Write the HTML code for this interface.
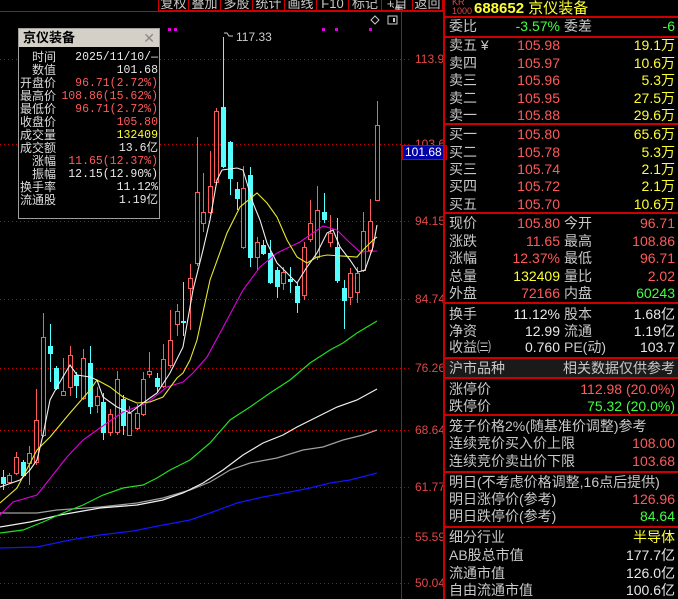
<!DOCTYPE html>
<html><head><meta charset="utf-8"><style>
*{margin:0;padding:0;box-sizing:border-box}
body{width:678px;height:599px;background:#000;overflow:hidden;position:relative;font-family:"Liberation Sans","Noto Sans CJK SC",sans-serif;color:#c8c8c8}
.a{position:absolute;white-space:nowrap}
.tb{position:absolute;top:0;height:11px;border-right:1px solid #c00;border-bottom:1px solid #c00;color:#c8c8c8;font-size:13px;line-height:8px;text-align:center;overflow:hidden}
.ax{position:absolute;left:415px;font-size:12px;color:#e04848;font-family:"Liberation Sans",sans-serif}
.ib{position:absolute;font-size:12px;line-height:13px}
.p{position:absolute;left:449px;width:228px;font-size:14px;height:18px;line-height:18px}
.p .l{position:absolute;left:0;color:#c8c8c8}
.p .m{position:absolute;right:117px;}
.p .m2{position:absolute;left:115px;color:#c8c8c8}
.p .r{position:absolute;right:2px}
.hl{position:absolute;left:443px;width:235px;height:2px;background:#c00}
.R{color:#ff5a5a}.G{color:#40ff40}.Y{color:#ffff30}.W{color:#e8e8e8}
</style></head><body>
<div class="tb" style="left:158px;width:31px;border-left:1px solid #c00">复权</div>
<div class="tb" style="left:189px;width:32px">叠加</div>
<div class="tb" style="left:221px;width:32px">多股</div>
<div class="tb" style="left:253px;width:32px">统计</div>
<div class="tb" style="left:285px;width:32px">画线</div>
<div class="tb" style="left:317px;width:32px">F10</div>
<div class="tb" style="left:349px;width:33px">标记</div>
<div class="tb" style="left:382px;width:31px">+自选</div>
<div class="tb" style="left:413px;width:30px">返回</div>
<div class="a" style="left:0;top:11px;width:443px;height:1px;background:#c00"></div>
<svg class="a" style="left:0;top:0" width="443" height="599">
<line x1="401.5" y1="12" x2="401.5" y2="599" stroke="#c00"/>
<g stroke="#c00" stroke-dasharray="1,3">
<line x1="0" y1="59.5" x2="410" y2="59.5"/><line x1="0" y1="144.5" x2="410" y2="144.5"/><line x1="0" y1="221.5" x2="410" y2="221.5"/><line x1="0" y1="299.5" x2="410" y2="299.5"/><line x1="0" y1="368.5" x2="410" y2="368.5"/><line x1="0" y1="430.5" x2="410" y2="430.5"/><line x1="0" y1="487.5" x2="410" y2="487.5"/><line x1="0" y1="537.5" x2="410" y2="537.5"/><line x1="0" y1="583.5" x2="410" y2="583.5"/>
</g>
<g fill="#e000e0"><rect x="168" y="28" width="3" height="3"/><rect x="174" y="28" width="3" height="3"/><rect x="322" y="28" width="3" height="3"/><rect x="335" y="28" width="3" height="3"/><rect x="369" y="28" width="3" height="3"/></g>
<path d="M375 16 l4 4 -4 4 -4 -4z" fill="none" stroke="#ccc"/>
<rect x="388" y="16" width="9" height="8" fill="none" stroke="#ccc"/><rect x="393" y="18" width="2" height="4" fill="#ccc"/>
<path d="M224 33 h3 l2 3 h4" fill="none" stroke="#ccc"/>
<text x="236" y="41" fill="#ccc" font-size="12" font-family="Liberation Sans">117.33</text>
<g fill="none" stroke-width="1.2">
<polyline stroke="#1414ff" points="0,548 37,547 70,540 100,535 133,531 163,525 190,520 210,513 237,503 263,497 290,492 310,488 330,483 350,480 377,473"/>
<polyline stroke="#a0a0a0" points="0,513 37,513 57,510 100,507 137,503 163,498 190,490 210,482 230,470 250,463 277,458 303,450 323,447 343,440 363,435 377,430"/>
<polyline stroke="#f0f0f0" points="0,527 30,522 60,515 100,508 137,505 163,500 183,493 203,483 223,470 243,455 263,443 283,435 297,427 317,417 337,407 357,400 377,389"/>
<polyline stroke="#20e020" points="0,533 23,530 43,522 63,513 83,505 103,495 123,488 143,485 157,478 170,470 190,460 210,443 230,420 250,407 270,393 290,380 310,363 330,350 343,343 357,333 377,321"/>
</g>
<g stroke="#ff5a5a" fill="#000">
<line x1="9.5" y1="473" x2="9.5" y2="484"/><rect x="7.5" y="475.5" width="4" height="7"/>
<line x1="16.5" y1="452" x2="16.5" y2="475"/><rect x="14.5" y="457.5" width="4" height="16"/>
<line x1="29.5" y1="446" x2="29.5" y2="485"/><rect x="27.5" y="453.5" width="4" height="10"/>
<line x1="36.5" y1="389" x2="36.5" y2="465"/><rect x="34.5" y="420.5" width="4" height="42"/>
<line x1="43.5" y1="313" x2="43.5" y2="437"/><rect x="41.5" y="337.5" width="4" height="98"/>
<line x1="63.5" y1="358" x2="63.5" y2="396"/><rect x="61.5" y="391.5" width="4" height="4"/>
<line x1="70.5" y1="346" x2="70.5" y2="396"/><rect x="68.5" y="355.5" width="4" height="32"/>
<line x1="83.5" y1="349" x2="83.5" y2="400"/><rect x="81.5" y="358.5" width="4" height="40"/>
<line x1="97.5" y1="387" x2="97.5" y2="413"/><rect x="95.5" y="396.5" width="4" height="9"/>
<line x1="110.5" y1="409" x2="110.5" y2="436"/><rect x="108.5" y="414.5" width="4" height="18"/>
<line x1="117.5" y1="371" x2="117.5" y2="435"/><rect x="115.5" y="379.5" width="4" height="53"/>
<line x1="129.5" y1="406" x2="129.5" y2="436"/><rect x="127.5" y="413.5" width="4" height="22"/>
<line x1="137.5" y1="404" x2="137.5" y2="430"/><rect x="135.5" y="413.5" width="4" height="15"/>
<line x1="143.5" y1="372" x2="143.5" y2="416"/><rect x="141.5" y="379.5" width="4" height="35"/>
<line x1="149.5" y1="352" x2="149.5" y2="378"/><rect x="147.5" y="371.5" width="4" height="3"/>
<line x1="163.5" y1="344" x2="163.5" y2="388"/><rect x="161.5" y="359.5" width="4" height="27"/>
<line x1="170.5" y1="310" x2="170.5" y2="368"/><rect x="168.5" y="340.5" width="4" height="25"/>
<line x1="177.5" y1="304" x2="177.5" y2="336"/><rect x="175.5" y="311.5" width="4" height="13"/>
<line x1="190.5" y1="264" x2="190.5" y2="330"/><rect x="188.5" y="278.5" width="4" height="10"/>
<line x1="197.5" y1="137" x2="197.5" y2="266"/><rect x="195.5" y="192.5" width="4" height="71"/>
<line x1="203.5" y1="173" x2="203.5" y2="232"/><rect x="201.5" y="212.5" width="4" height="11"/>
<line x1="210.5" y1="151" x2="210.5" y2="214"/><rect x="208.5" y="186.5" width="4" height="26"/>
<line x1="216.5" y1="108" x2="216.5" y2="185"/><rect x="214.5" y="111.5" width="4" height="71"/>
<line x1="243.5" y1="166" x2="243.5" y2="249"/><rect x="241.5" y="188.5" width="4" height="59"/>
<line x1="257.5" y1="237" x2="257.5" y2="271"/><rect x="255.5" y="242.5" width="4" height="15"/>
<line x1="283.5" y1="267" x2="283.5" y2="290"/><rect x="281.5" y="272.5" width="4" height="11"/>
<line x1="304.5" y1="242" x2="304.5" y2="300"/><rect x="302.5" y="247.5" width="4" height="48"/>
<line x1="310.5" y1="200" x2="310.5" y2="242"/><rect x="308.5" y="223.5" width="4" height="16"/>
<line x1="317.5" y1="186" x2="317.5" y2="260"/><rect x="315.5" y="210.5" width="4" height="47"/>
<line x1="330.5" y1="215" x2="330.5" y2="247"/><rect x="328.5" y="233.5" width="4" height="9"/>
<line x1="350.5" y1="268" x2="350.5" y2="305"/><rect x="348.5" y="273.5" width="4" height="24"/>
<line x1="357.5" y1="267" x2="357.5" y2="303"/><rect x="355.5" y="273.5" width="4" height="19"/>
<line x1="363.5" y1="212" x2="363.5" y2="272"/><rect x="361.5" y="231.5" width="4" height="39"/>
<line x1="370.5" y1="199" x2="370.5" y2="253"/><rect x="368.5" y="221.5" width="4" height="29"/>
<line x1="377.5" y1="101" x2="377.5" y2="125"/><rect x="375.5" y="125.5" width="4" height="75"/>
</g>
<g stroke="#54ffff" fill="#54ffff">
<line x1="3.5" y1="470" x2="3.5" y2="490"/><rect x="1.5" y="477.5" width="4" height="6"/>
<line x1="23.5" y1="460" x2="23.5" y2="477"/><rect x="21.5" y="462.5" width="4" height="13"/>
<line x1="50.5" y1="324" x2="50.5" y2="382"/><rect x="48.5" y="346.5" width="4" height="7"/>
<line x1="56.5" y1="366" x2="56.5" y2="390"/><rect x="54.5" y="368.5" width="4" height="20"/>
<line x1="76.5" y1="372" x2="76.5" y2="398"/><rect x="74.5" y="375.5" width="4" height="10"/>
<line x1="90.5" y1="346" x2="90.5" y2="414"/><rect x="88.5" y="363.5" width="4" height="43"/>
<line x1="103.5" y1="393" x2="103.5" y2="440"/><rect x="101.5" y="402.5" width="4" height="30"/>
<line x1="123.5" y1="395" x2="123.5" y2="435"/><rect x="121.5" y="399.5" width="4" height="26"/>
<line x1="157.5" y1="373" x2="157.5" y2="393"/><rect x="155.5" y="378.5" width="4" height="8"/>
<line x1="183.5" y1="282" x2="183.5" y2="336"/><rect x="181.5" y="321.5" width="4" height="1"/>
<line x1="223.5" y1="37" x2="223.5" y2="168"/><rect x="221.5" y="107.5" width="4" height="59"/>
<line x1="230.5" y1="141" x2="230.5" y2="195"/><rect x="228.5" y="142.5" width="4" height="36"/>
<line x1="237.5" y1="182" x2="237.5" y2="210"/><rect x="235.5" y="189.5" width="4" height="9"/>
<line x1="250.5" y1="167" x2="250.5" y2="267"/><rect x="248.5" y="175.5" width="4" height="82"/>
<line x1="263.5" y1="240" x2="263.5" y2="255"/><rect x="261.5" y="245.5" width="4" height="8"/>
<line x1="270.5" y1="240" x2="270.5" y2="284"/><rect x="268.5" y="253.5" width="4" height="29"/>
<line x1="277.5" y1="267" x2="277.5" y2="298"/><rect x="275.5" y="270.5" width="4" height="16"/>
<line x1="290.5" y1="267" x2="290.5" y2="293"/><rect x="288.5" y="279.5" width="4" height="2"/>
<line x1="297.5" y1="283" x2="297.5" y2="313"/><rect x="295.5" y="286.5" width="4" height="16"/>
<line x1="324.5" y1="193" x2="324.5" y2="223"/><rect x="322.5" y="212.5" width="4" height="7"/>
<line x1="337.5" y1="218" x2="337.5" y2="283"/><rect x="335.5" y="247.5" width="4" height="33"/>
<line x1="344.5" y1="280" x2="344.5" y2="329"/><rect x="342.5" y="288.5" width="4" height="12"/>
</g>
<g fill="none" stroke-width="1.1">
<polyline stroke="#e000e0" points="0,515 13,502 37,495 67,457 83,440 97,430 123,412 147,403 167,387 183,382 193,373 207,357 227,320 243,290 260,267 277,253 300,242 323,226 337,230 347,240 360,252 377,251"/>
<polyline stroke="#e8e830" points="0,503 17,488 37,450 50,437 70,413 90,390 97,380 110,387 123,397 137,403 150,402 163,397 177,378 183,373 190,360 197,340 210,280 227,233 240,207 257,193 267,203 277,217 287,240 297,257 307,263 317,257 327,255 357,257 363,250 373,240 377,237"/>
<polyline stroke="#f0f0f0" points="0,487 20,480 30,470 37,460 43,435 50,400 57,387 70,365 77,375 90,377 97,380 103,397 117,407 130,413 143,403 157,393 170,373 183,347 193,290 203,250 210,220 217,180 222,170 237,168 243,170 253,203 260,220 267,243 277,263 287,273 297,283 307,267 317,253 327,233 333,230 340,247 350,260 358,272 365,270 373,247 377,225"/>
</g>
</svg>
<div class="ax" style="top:52px">113.9</div>
<div class="ax" style="top:137px">103.6</div>
<div class="ax" style="top:214px">94.15</div>
<div class="ax" style="top:292px">84.74</div>
<div class="ax" style="top:361px">76.26</div>
<div class="ax" style="top:423px">68.64</div>
<div class="ax" style="top:480px">61.77</div>
<div class="ax" style="top:530px">55.59</div>
<div class="ax" style="top:576px">50.04</div>
<div class="a" style="left:402px;top:145px;width:45px;height:15px;background:#0000a8;border:1px solid #c00;color:#fff;font-size:12px;line-height:13px;padding-left:2px">101.68</div>
<div class="a" style="left:18px;top:28px;width:142px;height:191px;background:#000;border:1px solid #a0a0a0">
<div style="height:18px;background:#d4d0c8;color:#000;font-size:13px;font-weight:bold;line-height:18px;padding-left:4px">京仪装备<span style="position:absolute;right:4px;top:0;color:#888;font-weight:normal;font-size:14px">✕</span></div>
</div>
<div class="ib" style="left:18px;top:51px;width:38px;text-align:right;color:#ddd">时间<br>数值<br>开盘价<br>最高价<br>最低价<br>收盘价<br>成交量<br>成交额<br>涨幅<br>振幅<br>换手率<br>流通股</div>
<div class="ib" style="left:60px;top:51px;width:98px;text-align:right;font-family:'Liberation Mono','Noto Sans CJK SC',monospace;font-size:11.5px"><span class="W">2025/11/10/—</span><br><span class="W">101.68</span><br><span class="R">96.71(2.72%)</span><br><span class="R">108.86(15.62%)</span><br><span class="R">96.71(2.72%)</span><br><span class="R">105.80</span><br><span class="Y">132409</span><br><span class="W">13.6亿</span><br><span class="R">11.65(12.37%)</span><br><span class="W">12.15(12.90%)</span><br><span class="W">11.12%</span><br><span class="W">1.19亿</span></div>
<div class="a" style="left:443px;top:0;width:2px;height:599px;background:#c00"></div>
<div class="a" style="left:452px;top:-2px;font-size:9px;color:#e04848;line-height:9px">KR<br>1000</div>
<div class="a" style="left:474px;top:-3px;font-size:15px;color:#ffff30;font-weight:bold">688652 <span style="font-weight:normal">京仪装备</span></div>
<div class="hl" style="top:16px"></div><div class="hl" style="top:36px"></div><div class="hl" style="top:123px"></div><div class="hl" style="top:212px"></div><div class="hl" style="top:302px"></div><div class="hl" style="top:357px"></div><div class="hl" style="top:377px"></div><div class="hl" style="top:414px"></div><div class="hl" style="top:471px"></div><div class="hl" style="top:526px"></div>
<div class="p" style="top:17px"><span class="l">委比</span><span class="m G">-3.57%</span><span class="m2">委差</span><span class="r G">-6</span></div>
<div class="p" style="top:36px"><span class="l">卖五 ¥</span><span class="m R">105.98</span><span class="r Y">19.1万</span></div>
<div class="p" style="top:54px"><span class="l">卖四</span><span class="m R">105.97</span><span class="r Y">10.6万</span></div>
<div class="p" style="top:71px"><span class="l">卖三</span><span class="m R">105.96</span><span class="r Y">5.3万</span></div>
<div class="p" style="top:89px"><span class="l">卖二</span><span class="m R">105.95</span><span class="r Y">27.5万</span></div>
<div class="p" style="top:106px"><span class="l">卖一</span><span class="m R">105.88</span><span class="r Y">29.6万</span></div>
<div class="p" style="top:125px"><span class="l">买一</span><span class="m R">105.80</span><span class="r Y">65.6万</span></div>
<div class="p" style="top:143px"><span class="l">买二</span><span class="m R">105.78</span><span class="r Y">5.3万</span></div>
<div class="p" style="top:160px"><span class="l">买三</span><span class="m R">105.74</span><span class="r Y">2.1万</span></div>
<div class="p" style="top:177px"><span class="l">买四</span><span class="m R">105.72</span><span class="r Y">2.1万</span></div>
<div class="p" style="top:195px"><span class="l">买五</span><span class="m R">105.70</span><span class="r Y">10.6万</span></div>
<div class="p" style="top:214px"><span class="l">现价</span><span class="m R">105.80</span><span class="m2">今开</span><span class="r R">96.71</span></div>
<div class="p" style="top:232px"><span class="l">涨跌</span><span class="m R">11.65</span><span class="m2">最高</span><span class="r R">108.86</span></div>
<div class="p" style="top:249px"><span class="l">涨幅</span><span class="m R">12.37%</span><span class="m2">最低</span><span class="r R">96.71</span></div>
<div class="p" style="top:267px"><span class="l">总量</span><span class="m Y">132409</span><span class="m2">量比</span><span class="r R">2.02</span></div>
<div class="p" style="top:284px"><span class="l">外盘</span><span class="m R">72166</span><span class="m2">内盘</span><span class="r G">60243</span></div>
<div class="p" style="top:305px"><span class="l">换手</span><span class="m W">11.12%</span><span class="m2">股本</span><span class="r W">1.68亿</span></div>
<div class="p" style="top:322px"><span class="l">净资</span><span class="m W">12.99</span><span class="m2">流通</span><span class="r W">1.19亿</span></div>
<div class="p" style="top:338px"><span class="l">收益㈢</span><span class="m W">0.760</span><span class="m2">PE(动)</span><span class="r W">103.7</span></div>
<div class="a" style="left:445px;top:359px;width:233px;height:18px;background:#1a1a1a"></div>
<div class="p" style="top:359px"><span class="l">沪市品种</span><span class="r">相关数据仅供参考</span></div>
<div class="p" style="top:380px"><span class="l">涨停价</span><span class="r R">112.98 (20.0%)</span></div>
<div class="p" style="top:397px"><span class="l">跌停价</span><span class="r G">75.32 (20.0%)</span></div>
<div class="p" style="top:417px"><span class="l">笼子价格2%(随基准价调整)参考</span></div>
<div class="p" style="top:434px"><span class="l">连续竞价买入价上限</span><span class="r R">108.00</span></div>
<div class="p" style="top:452px"><span class="l">连续竞价卖出价下限</span><span class="r R">103.68</span></div>
<div class="p" style="top:473px"><span class="l">明日(不考虑价格调整,16点后提供)</span></div>
<div class="p" style="top:490px"><span class="l">明日涨停价(参考)</span><span class="r R">126.96</span></div>
<div class="p" style="top:507px"><span class="l">明日跌停价(参考)</span><span class="r G">84.64</span></div>
<div class="p" style="top:528px"><span class="l">细分行业</span><span class="r Y">半导体</span></div>
<div class="p" style="top:546px"><span class="l">AB股总市值</span><span class="r W">177.7亿</span></div>
<div class="p" style="top:564px"><span class="l">流通市值</span><span class="r W">126.0亿</span></div>
<div class="p" style="top:581px"><span class="l">自由流通市值</span><span class="r W">100.6亿</span></div>
</body></html>
